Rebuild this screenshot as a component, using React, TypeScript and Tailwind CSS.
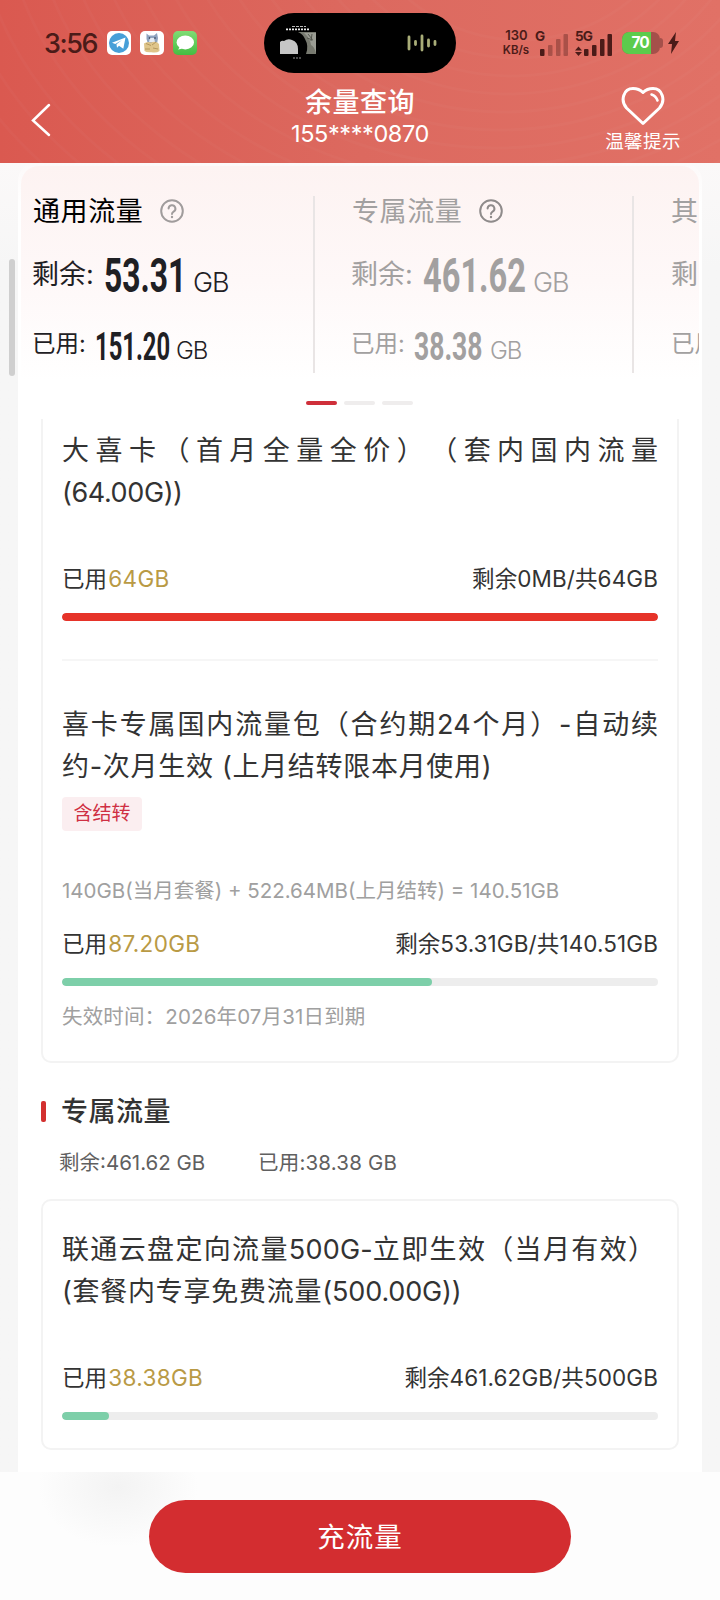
import { ReactNode } from "react";

const NUM_FONT = "font-['Roboto','Noto_Sans_CJK_SC',sans-serif]";

type Summary = {
  title: string;
  left: string;
  leftBox: string;
  leftScale: string;
  used: string;
  usedBox: string;
  usedScale: string;
  active?: boolean;
};

const SUMMARIES: Summary[] = [
  {
    title: "通用流量",
    left: "53.31",
    leftBox: "w-[84px]",
    leftScale: "scale-x-[0.65]",
    used: "151.20",
    usedBox: "w-[76px]",
    usedScale: "scale-x-[0.61]",
    active: true,
  },
  {
    title: "专属流量",
    left: "461.62",
    leftBox: "w-[105px]",
    leftScale: "scale-x-[0.665]",
    used: "38.38",
    usedBox: "w-[71px]",
    usedScale: "scale-x-[0.68]",
  },
];

function HeaderArcs() {
  const rings = Array.from({ length: 16 }, (_, i) => i);
  return (
    <svg className="absolute inset-0" width="720" height="163" fill="none" stroke="#fff" strokeOpacity="0.025" strokeWidth="3">
      {rings.map((i) => (
        <ellipse key={i} cx={520 - i * 4} cy={-150 + i * 4} rx={180 + i * 24} ry={190 + i * 14} />
      ))}
    </svg>
  );
}

function TelegramIcon() {
  return (
    <svg width="24" height="24" viewBox="0 0 24 24">
      <rect width="24" height="24" rx="5" fill="#fff" />
      <circle cx="12" cy="12" r="10" fill="#479fd8" />
      <path d="M5 11.800 18.500 6.600 16.300 17.800 12 14.800 10 16.800 9.500 13.200 15 9 8.300 13Z" fill="#fff" />
    </svg>
  );
}

function CatIcon() {
  return (
    <svg width="24" height="24" viewBox="0 0 24 24">
      <rect width="24" height="24" rx="5" fill="#fff" />
      <path d="M6.500 2.500 9 4.500h5l3-2.500 1 5-1 6H8L6.500 8Z" fill="#8fa3bf" />
      <path d="M10 7h4l1 4h-6Z" fill="#e4ebf3" />
      <path d="M4 12.500q3-2.500 7-1 5-2 8 1.500l.5 7q-3 2.200-8 1.200-5 .5-7-1.200Z" fill="#dfc58a" />
      <path d="M6 12.500l5 2M12 14l4-3M5 18h5M13 17l5 1" stroke="#b0935a" strokeWidth="0.900" />
      <circle cx="9.500" cy="7" r="0.800" fill="#2c3648" />
      <circle cx="15" cy="7" r="0.800" fill="#2c3648" />
    </svg>
  );
}

function MessageIcon() {
  return (
    <svg width="24" height="24" viewBox="0 0 24 24">
      <defs>
        <linearGradient id="msg" x1="0" y1="0" x2="0" y2="1">
          <stop stopColor="#7fdc74" />
          <stop offset="1" stopColor="#45bd42" />
        </linearGradient>
      </defs>
      <rect width="24" height="24" rx="5" fill="url(#msg)" />
      <ellipse cx="12.300" cy="11.400" rx="8.700" ry="7" fill="#fff" />
      <path d="M6.500 15q.2 2.500-1.500 3.600 3-.1 5-1.800Z" fill="#fff" />
    </svg>
  );
}

function Island() {
  return (
    <div className="flex h-[60px] w-[192px] items-center justify-between rounded-full bg-black pr-[19px] pl-4">
      <svg width="36" height="36" viewBox="0 0 36 36">
        <path d="M12 1.500h14" stroke="#bbb" strokeWidth="1.200" strokeDasharray="3 1" />
        <path d="M6 4.300h23" stroke="#eee" strokeWidth="1.800" strokeDasharray="2 1" />
        <path d="M18 7h18v22H26q3-8-1-15-2-5-7-7Z" fill="#77796f" />
        <path d="M24 8h12v20q-2-7-5-8-1-7-7-12Z" fill="#9b9d94" />
        <path d="M28 9l4 5M32 9l-1 7M27 13l6 2" stroke="#55584f" />
        <path d="M0 29V17q2-2 4-1 4-3 8-1 6 2 6 9v5Z" fill="#c6c6c6" />
        <path d="M13 33h9" stroke="#999" strokeDasharray="2 1" />
      </svg>
      <svg width="30" height="18" viewBox="0 0 30 18" stroke="#a9ad78" strokeWidth="2.800" strokeLinecap="round">
        <path d="M2 3v12M8.500 7.500v3M15 2v14M21.500 6v6M28 7.500v3" />
      </svg>
    </div>
  );
}

function Signal({ label, faded }: { label: string; faded?: boolean }) {
  return (
    <svg width="38" height="28" viewBox="0 0 38 28" fill="#4b1b18">
      <text x="0" y="12" fontSize="13.500" fontWeight="700" fontFamily="Inter, sans-serif" textLength={faded ? 9.5 : 18}>
        {label}
      </text>
      {!faded && <path d="M3.500 17.500 7 21.500H0ZM3.500 27 0 23h7Z" />}
      <rect x={faded ? 5 : 9} y="20" width="4.500" height="7" rx="1" />
      <g opacity={faded ? 0.35 : 1}>
        <rect x={faded ? 13 : 17} y="16" width="4.500" height="11" rx="1" />
        <rect x={faded ? 21 : 25} y="10" width="4.500" height="17" rx="1" />
        <rect x={faded ? 28.5 : 32.5} y="5" width="4.500" height="22" rx="1" />
      </g>
    </svg>
  );
}

function Battery() {
  return (
    <div className="flex items-center">
      <div className="flex h-[22px] w-[38px] overflow-hidden rounded-[7px] bg-[#a5504a]">
        <div className="flex w-[29px] items-center justify-end bg-[#5ccb4c] pr-[2px]">
          <span className="text-[15.500px] leading-none font-bold tracking-[-0.8px] text-white">70</span>
        </div>
      </div>
      <div className="h-2.5 w-[3px] rounded-r-full bg-[#a5504a]" />
      <svg className="ml-[5px]" width="11" height="22" viewBox="0 0 11 22" fill="#4b1b18">
        <path d="M8 0 0 12h4L3 22 11 9H7Z" />
      </svg>
    </div>
  );
}

function Header() {
  return (
    <header className="relative h-[163px] bg-linear-to-r from-[#da5950] via-[#dc695f] to-[#e17166] text-white">
      <HeaderArcs />
      <div className="relative flex h-[86px] items-center">
        <div className="flex w-[264px] items-center pl-[44px] text-[#4b1b18]">
          <span className="w-[63px] text-[27px] leading-none font-medium tracking-[-1.4px]">3:56</span>
          <div className="flex gap-[9px]">
            <TelegramIcon />
            <CatIcon />
            <MessageIcon />
          </div>
        </div>
        <Island />
        <div className="flex flex-1 items-center pl-[46px] text-[#4b1b18]">
          <div className="mr-1 w-[29px] text-center text-[13px] leading-[15.500px] font-semibold">
            <div>130</div>
            <div className="-ml-px text-[11.500px]">KB/s</div>
          </div>
          <Signal label="G" faded />
          <div className="w-[2px]" />
          <Signal label="5G" />
          <div className="w-[9px]" />
          <Battery />
        </div>
      </div>
      <div className="relative flex">
        <div className="w-[200px] pt-[17px] pl-[31px]">
          <svg width="20" height="34" viewBox="0 0 20 34" fill="none" stroke="#fff" strokeWidth="2.500" strokeLinecap="round">
            <path d="M18 2 2 17.500 18 32" />
          </svg>
        </div>
        <div className="flex flex-1 flex-col items-center pt-px">
          <h1 className="text-[27px] leading-[32px] font-medium tracking-[0.5px]">余量查询</h1>
          <p className="text-[23.500px] leading-[30px] tracking-[-0.4px]">155****0870</p>
        </div>
        <div className="flex w-[200px] flex-col items-center pl-[46px]">
          <svg width="44" height="40" viewBox="0 0 44 40" fill="none" stroke="#fff" strokeWidth="3" strokeLinecap="round" strokeLinejoin="round">
            <path d="M22 37.500 5.500 22C-1 14.500 2.500 2.500 12 2.500c4 0 7 1 10 4 3-3 6-4 10-4 9.500 0 13 12 6.500 19.500Z" />
            <path d="M30.500 8.500q4.500 1.500 6 6" strokeWidth="2.500" />
          </svg>
          <p className="mt-px text-[18.500px] leading-[28px] tracking-[0.4px]">温馨提示</p>
        </div>
      </div>
    </header>
  );
}

function Condensed({ children, box, scale, size }: { children: ReactNode; box: string; scale: string; size: string }) {
  return (
    <span className={`inline-block ${box}`}>
      <span className={`inline-block origin-left font-bold ${NUM_FONT} ${scale} ${size}`}>{children}</span>
    </span>
  );
}

function SummaryColumn({ item }: { item: Summary }) {
  return (
    <div className="flex w-[319px] shrink-0">
      <div className={`w-[280px] whitespace-nowrap ${item.active ? "text-[#1f2024]" : "text-[#a2a0a0]"}`}>
        <div className={`flex h-[30px] items-center ${item.active ? "text-black" : ""}`}>
          <span className="text-[27px] leading-none tracking-[0.6px]">{item.title}</span>
          <svg className="ml-[17px]" width="24" height="24" viewBox="0 0 24 24" fill="none" stroke={item.active ? "#a09c9c" : "#8f8b8b"} strokeWidth="2" strokeLinecap="round">
            <circle cx="12" cy="12" r="10.800" />
            <path d="M8.600 9.600a3.400 3.400 0 1 1 5 3q-1.600 1-1.600 2.400" />
            <path d="M12 18v.1" strokeWidth="2.400" />
          </svg>
        </div>
        <div className="mt-[23px] flex h-[50px] items-center">
          <span className="-ml-px w-[72px] text-[27px] leading-none">剩余:</span>
          <Condensed box={`${item.leftBox} h-[50px]`} scale={item.leftScale} size="text-[49px] leading-[54px]">
            {item.left}
          </Condensed>
          <span className="ml-[5px] pt-[16px] text-[27px] leading-none font-light tracking-[-1px]">GB</span>
        </div>
        <div className="mt-[22px] flex h-[46px] items-center">
          <span className="-ml-px w-[63px] text-[23.500px] leading-none">已用:</span>
          <Condensed box={`${item.usedBox} h-[46px]`} scale={item.usedScale} size="text-[39px] leading-[52px]">
            {item.used}
          </Condensed>
          <span className="ml-[5px] pt-[13px] text-[24px] leading-none font-light tracking-[-1px]">GB</span>
        </div>
      </div>
      <div className="h-[177px] w-[2px] bg-[#e9e5e5]" />
    </div>
  );
}

// Edge of the next card in the carousel
function SummaryPeek() {
  return (
    <div className="w-[28px] shrink-0 overflow-hidden whitespace-nowrap text-[#a2a0a0]">
      <div className="flex h-[30px] items-center text-[27px] leading-none">其</div>
      <div className="mt-[23px] flex h-[50px] items-center text-[27px] leading-none">剩</div>
      <div className="mt-[22px] flex h-[46px] items-center text-[23.500px] leading-none">已用</div>
    </div>
  );
}

function SummaryPanel() {
  return (
    <section className="mx-[3px] mt-[3px] h-[253px] overflow-hidden rounded-t-[18px] bg-linear-to-b from-[#fdf3f2] via-[#fef8f8] via-45% to-white to-85% pt-[30px] pl-[12px]">
      <div className="flex">
        {SUMMARIES.map((item) => (
          <SummaryColumn key={item.title} item={item} />
        ))}
        <SummaryPeek />
      </div>
      <div className="mt-[28px] flex gap-[7px] pl-[273px]">
        <div className="h-[4px] w-[31px] rounded-full bg-[#cf2f3a]" />
        <div className="h-[4px] w-[31px] rounded-full bg-[#efeded]" />
        <div className="h-[4px] w-[31px] rounded-full bg-[#efeded]" />
      </div>
    </section>
  );
}

function TitleLine({ children, justify, spacing }: { children: ReactNode; justify?: boolean; spacing?: string }) {
  return (
    <p
      className={`h-[42px] text-[27px] leading-[42px] whitespace-nowrap [text-spacing-trim:space-all] ${
        justify ? "[text-align-last:justify]" : (spacing ?? "tracking-[0.8px]")
      }`}
    >
      {children}
    </p>
  );
}

function Usage({ used, remain, percent, color }: { used: string; remain: string; percent: number; color: string }) {
  return (
    <div>
      <div className="flex h-[34px] items-center justify-between text-[22.500px] leading-none tracking-[0.1px]">
        <span>
          已用<span className="ml-px tracking-[0.35px] text-[#b99a45]">{used}</span>
        </span>
        <span>{remain}</span>
      </div>
      <div className="mt-[17px] h-[8px] overflow-hidden rounded-full bg-[#ededed]">
        <div className={`h-full rounded-full ${color}`} style={{ width: `${percent}%` }} />
      </div>
    </div>
  );
}

function Details() {
  return (
    <main className="px-[23px]">
      <div className="h-[644px] rounded-b-[10px] border-2 border-t-0 border-[#f3f3f3] px-[19px] pt-[11px]">
        <TitleLine justify>大喜卡（首月全量全价）（套内国内流量</TitleLine>
        <TitleLine spacing="tracking-[-0.4px]">(64.00G))</TitleLine>
        <div className="mt-[48px]">
          <Usage used="64GB" remain="剩余0MB/共64GB" percent={100} color="bg-[#e63329]" />
        </div>
        <div className="mt-[38px] h-[2px] bg-[#f6f6f6]" />
        <div className="mt-[43px]">
          <TitleLine justify>喜卡专属国内流量包（合约期24个月）-自动续</TitleLine>
          <TitleLine spacing="tracking-[0.7px]">约-次月生效 (上月结转限本月使用)</TitleLine>
        </div>
        <div className="mt-[9px] flex h-[34px] w-[80px] items-center justify-center rounded-[4px] bg-[#fbeef0] text-[19px] text-[#cf2f43]">
          含结转
        </div>
        <p className="mt-[45px] text-[20.500px] leading-[30px] text-[#a0a0a0]">
          140GB(当月套餐) + 522.64MB(上月结转) = 140.51GB
        </p>
        <div className="mt-[21px]">
          <Usage used="87.20GB" remain="剩余53.31GB/共140.51GB" percent={62} color="bg-[#7dcfa9]" />
        </div>
        <p className="mt-[16px] text-[20.500px] leading-[30px] tracking-[0.15px] text-[#a0a0a0]">失效时间：2026年07月31日到期</p>
      </div>

      <div className="mt-[31px] flex h-[34px] items-center">
        <div className="h-[21px] w-[5px] rounded-[2px] bg-[#d3302f]" />
        <h2 className="ml-[15px] pt-px text-[27px] leading-none font-medium tracking-[0.5px]">专属流量</h2>
      </div>
      <div className="mt-[20px] flex h-[30px] items-center pl-[18px] text-[20.500px] text-[#606060]">
        <span className="w-[199px]">剩余:461.62 GB</span>
        <span className="tracking-[0.2px]">已用:38.38 GB</span>
      </div>

      <div className="mt-[21px] h-[251px] rounded-[10px] border-2 border-[#f3f3f3] px-[19px] pt-[28px]">
        <TitleLine spacing="tracking-[1.35px]">
          联通云盘定向流量<span className="tracking-[0.2px]">500G-</span>立即生效（当月有效）
        </TitleLine>
        <TitleLine spacing="tracking-[0.75px]">
          (套餐内专享免费流量<span className="tracking-[-0.15px]">(500.00G))</span>
        </TitleLine>
        <div className="mt-[48px]">
          <Usage used="38.38GB" remain="剩余461.62GB/共500GB" percent={7.9} color="bg-[#7dcfa9]" />
        </div>
      </div>
    </main>
  );
}

export default function App() {
  return (
    <div
      lang="zh-CN"
      className="flex h-[1600px] w-[720px] flex-col overflow-hidden bg-[#f6f6f6] font-['Inter','Noto_Sans_CJK_SC',sans-serif] text-[#333]"
    >
      <Header />
      <div className="flex h-[1309px] bg-linear-to-b from-[#fbf9f9] to-[#f6f6f6] to-8%">
        <div className="w-[18px] pt-[96px] pl-[9px]">
          <div className="h-[117px] w-[6px] rounded-full bg-[#cfcfcf]" />
        </div>
        <div className="w-[684px] overflow-hidden rounded-t-[18px] bg-linear-to-b from-[#fcf9f9] to-white to-3%">
          <SummaryPanel />
          <Details />
        </div>
      </div>
      <footer className="flex-1 bg-[#fdfdfd] bg-[radial-gradient(ellipse_80px_60px_at_118px_15px,#f3f3f3,transparent)] pt-[28px]">
        <button className="mx-auto block h-[73px] w-[422px] rounded-full bg-[#d32d30] pt-[3px] text-[27.500px] tracking-[1px] text-white">
          充流量
        </button>
      </footer>
    </div>
  );
}
